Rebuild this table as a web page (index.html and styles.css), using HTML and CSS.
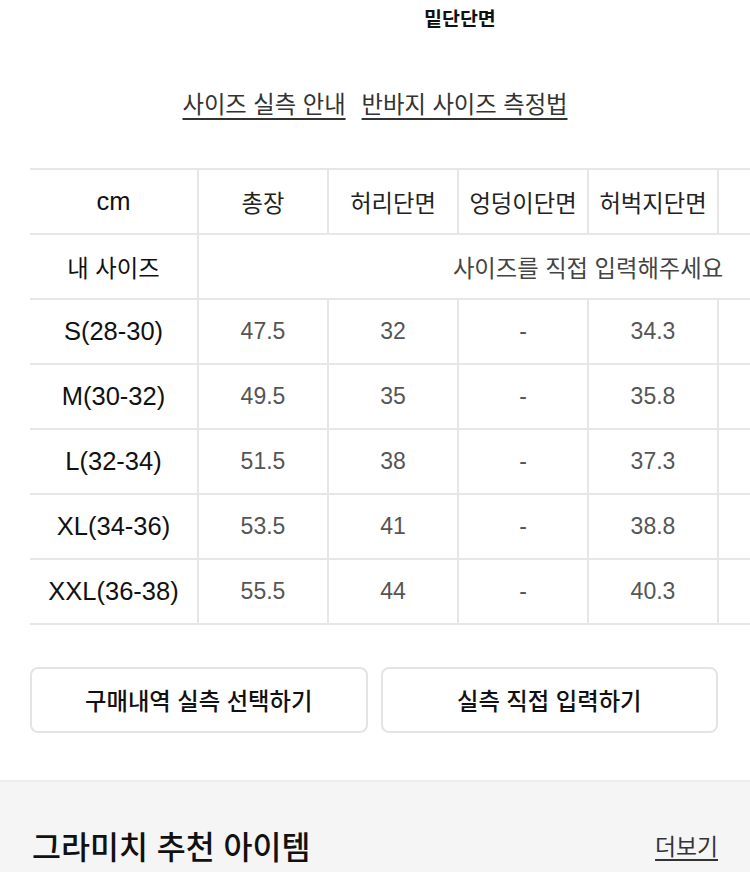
FILE: index.html
```html
<!DOCTYPE html>
<html lang="ko">
<head>
<meta charset="utf-8">
<link rel="stylesheet" href="styles.css">
</head>
<body>
<div class="page">
  <div class="top-label"><span>밑단단면</span></div>
  <div class="links">
    <a class="link">사이즈 실측 안내</a>
    <a class="link">반바지 사이즈 측정법</a>
  </div>
  <div class="table-wrap">
    <table class="size-table">
      <colgroup>
        <col class="c-first"><col class="c"><col class="c"><col class="c"><col class="c"><col class="c"><col class="c">
      </colgroup>
      <thead>
        <tr>
          <th class="first lat">cm</th>
          <th class="ko">총장</th>
          <th class="ko">허리단면</th>
          <th class="ko">엉덩이단면</th>
          <th class="ko">허벅지단면</th>
          <th class="ko"></th>
          <th class="ko"></th>
        </tr>
      </thead>
      <tbody>
        <tr>
          <td class="first ko">내 사이즈</td>
          <td class="ko hint" colspan="6">사이즈를 직접 입력해주세요</td>
        </tr>
        <tr>
          <td class="first lat">S(28-30)</td>
          <td class="num">47.5</td><td class="num">32</td><td class="num">-</td><td class="num">34.3</td><td class="num"></td><td class="num"></td>
        </tr>
        <tr>
          <td class="first lat">M(30-32)</td>
          <td class="num">49.5</td><td class="num">35</td><td class="num">-</td><td class="num">35.8</td><td class="num"></td><td class="num"></td>
        </tr>
        <tr>
          <td class="first lat">L(32-34)</td>
          <td class="num">51.5</td><td class="num">38</td><td class="num">-</td><td class="num">37.3</td><td class="num"></td><td class="num"></td>
        </tr>
        <tr>
          <td class="first lat">XL(34-36)</td>
          <td class="num">53.5</td><td class="num">41</td><td class="num">-</td><td class="num">38.8</td><td class="num"></td><td class="num"></td>
        </tr>
        <tr>
          <td class="first lat">XXL(36-38)</td>
          <td class="num">55.5</td><td class="num">44</td><td class="num">-</td><td class="num">40.3</td><td class="num"></td><td class="num"></td>
        </tr>
      </tbody>
    </table>
  </div>
  <div class="buttons">
    <button class="btn">구매내역 실측 선택하기</button>
    <button class="btn">실측 직접 입력하기</button>
  </div>
  <section class="recommend">
    <h2 class="rec-title">그라미치 추천 아이템</h2>
    <a class="more">더보기</a>
  </section>
</div>
</body>
</html>
```

FILE: styles.css
```css
* { box-sizing: border-box; }
html, body { margin: 0; padding: 0; background: #fff; }
body {
  font-family: "Liberation Sans", "Noto Sans CJK KR", sans-serif;
  color: #222;
  width: 750px;
  height: 872px;
  overflow: hidden;
}
.page { width: 750px; }

.top-label {
  height: 36px;
  line-height: 36px;
  padding-left: 424px;
  font-family: "Noto Sans CJK KR", sans-serif;
  font-weight: 700;
  font-size: 19.5px;
  color: #111;
}

.links {
  margin-top: 52px;
  display: flex;
  justify-content: center;
  gap: 16px;
  height: 30px;
  line-height: 30px;
}
.link {
  font-family: "Noto Sans CJK KR", sans-serif;
  font-size: 23.3px;
  color: #333;
  text-decoration: underline;
  text-decoration-thickness: 2px;
  text-underline-offset: 5px;
}

.table-wrap {
  margin-top: 50px;
  margin-left: 30px;
  width: 720px;
  overflow: hidden;
}
.size-table {
  border-collapse: collapse;
  table-layout: fixed;
  width: 948px;
}
.c-first { width: 168px; }
.c { width: 130px; }
.size-table th,
.size-table td {
  height: 65px;
  padding: 0;
  text-align: center;
  vertical-align: middle;
  border: 2px solid #e7e7e7;
  font-weight: 400;
  white-space: nowrap;
  overflow: hidden;
}
.size-table .first { border-left: none; color: #111; }
.size-table .lat { font-size: 25.5px; }
.size-table .ko { font-size: 23.3px; font-family: "Noto Sans CJK KR", sans-serif; color: #222; }
.size-table .first.ko { color: #111; }
.size-table .num { font-size: 23px; color: #555; }
.size-table .hint { color: #444; }

.buttons {
  margin: 42px 32px 0 30px;
  display: flex;
  gap: 13px;
}
.btn {
  flex: 1;
  height: 66px;
  background: #fff;
  border: 2px solid #e4e4e4;
  border-radius: 8px;
  font-family: "Noto Sans CJK KR", sans-serif;
  font-size: 23.3px;
  font-weight: 500;
  color: #111;
  padding: 0;
}

.recommend {
  margin-top: 47px;
  background: #f5f5f5;
  border-top: 2px solid #eeeeee;
  height: 200px;
  display: flex;
  justify-content: space-between;
  align-items: flex-start;
  padding: 42px 32px 0 32px;
}
.rec-title {
  margin: 0;
  font-family: "Noto Sans CJK KR", sans-serif;
  font-size: 31.5px;
  font-weight: 500;
  color: #111;
  line-height: 42px;
}
.more {
  margin-top: 7px;
  font-family: "Noto Sans CJK KR", sans-serif;
  font-size: 22.8px;
  color: #333;
  line-height: 30px;
  text-decoration: underline;
  text-underline-offset: 4px;
}
```
